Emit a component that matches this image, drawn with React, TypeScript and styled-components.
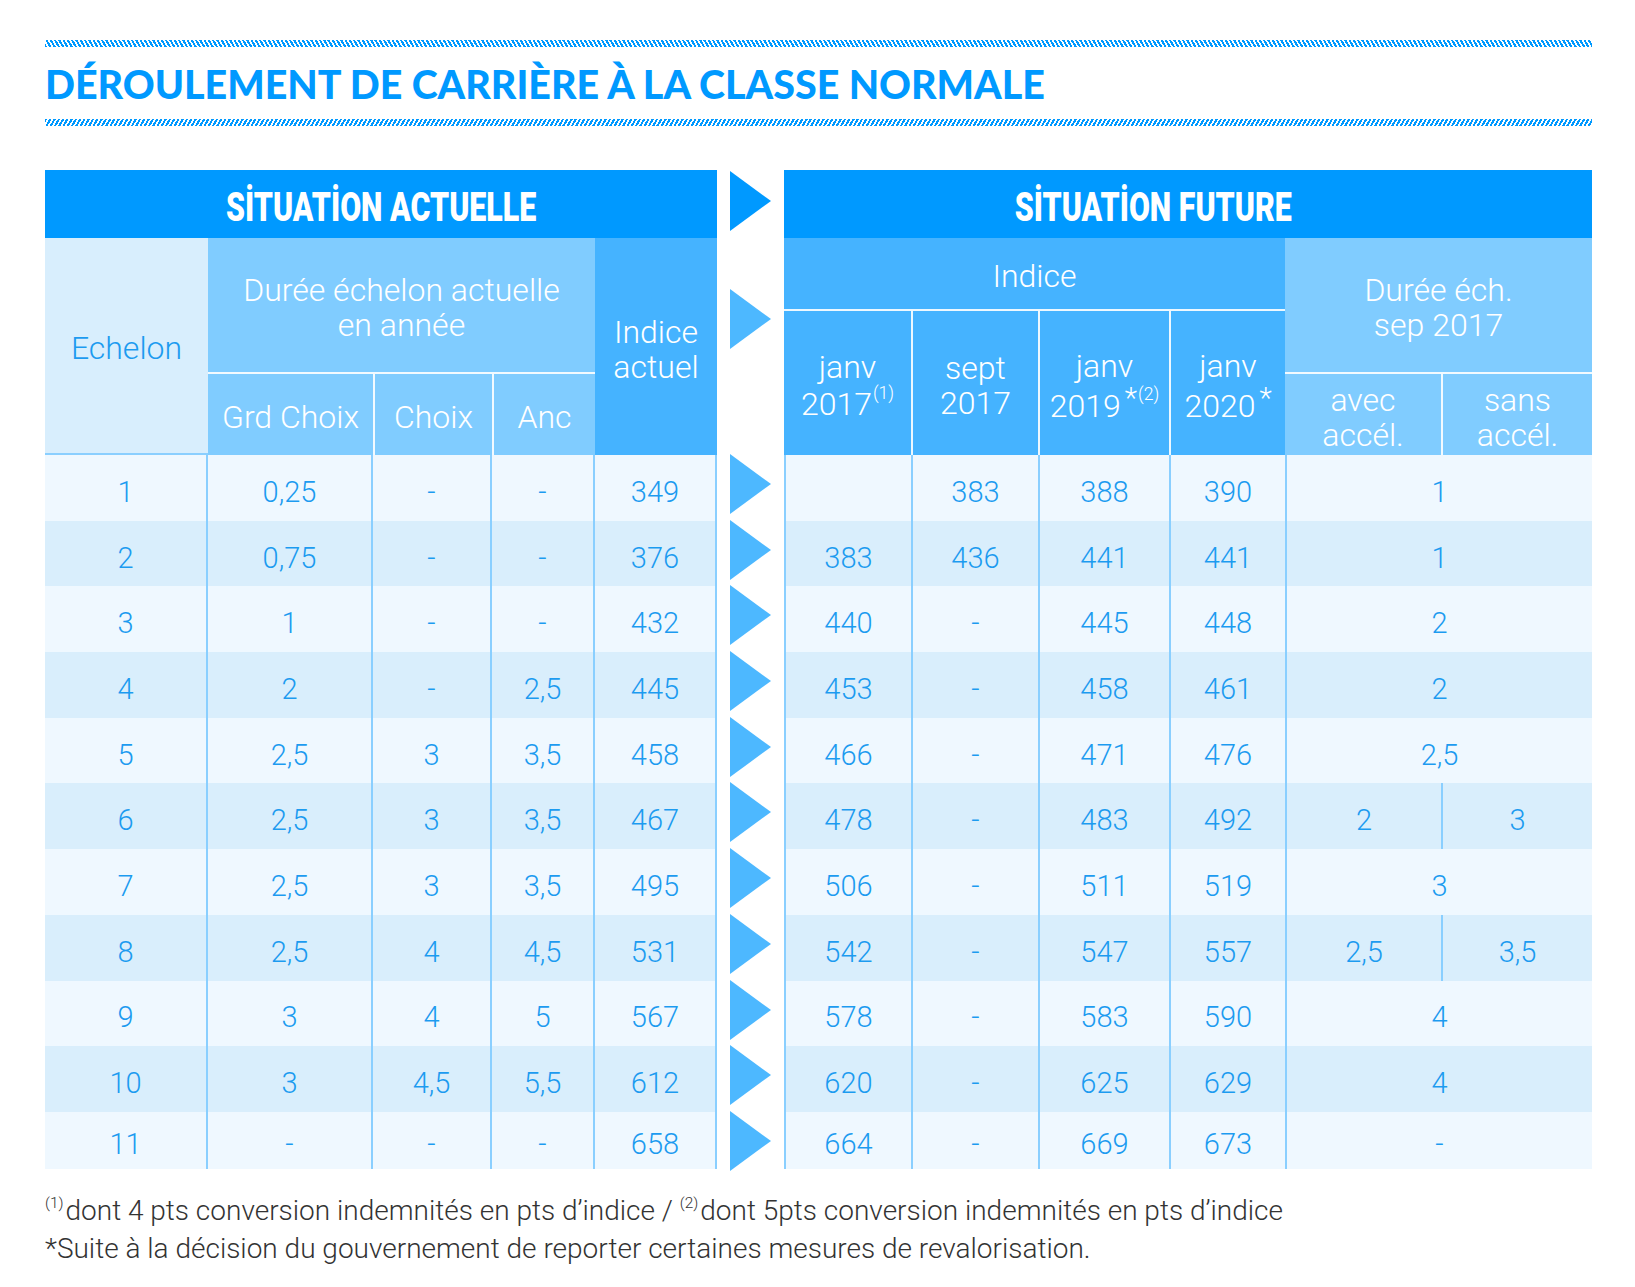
import React from "react"
import styled, { createGlobalStyle } from "styled-components"

const BLUE = "#0099ff"
const TEXT = "#1c9bf0"
const GRID_LINE = "#8acfff"
const WHITE_LINE = "rgba(255, 255, 255, 0.9)"
const ROWS = "68px 71px 63px 83px repeat(10, 65.7px) 57px"

const GlobalStyle = createGlobalStyle`
  html, body {
    margin: 0;
    padding: 0;
    background: #ffffff;
  }
  body {
    font-family: Roboto, "Noto Sans", sans-serif;
  }
`

const Page = styled.div`
  width: 1635px;
  height: 1287px;
  box-sizing: border-box;
  padding: 40px 0 0 45px;
`

const Hatch = styled.div<{ $flip?: boolean }>`
  width: 1547px;
  height: 7px;
  background: repeating-linear-gradient(
    ${p => (p.$flip ? "120deg" : "60deg")},
    ${BLUE} 0 2px,
    transparent 2px 3.7px
  );
`

const Title = styled.h1`
  margin: 0;
  height: 72px;
  display: flex;
  align-items: center;
  font-family: Lato, "Noto Sans", sans-serif;
  font-weight: 900;
  font-size: 39.4px;
  color: ${BLUE};
`

const Tables = styled.div`
  display: flex;
  margin-top: 44px;
`

const Grid = styled.div<{ $cols: string }>`
  display: grid;
  grid-template-columns: ${p => p.$cols};
  grid-template-rows: ${ROWS};
`

const TitleBar = styled.div<{ $shift?: number }>`
  grid-row: 1;
  grid-column: 1 / -1;
  background: ${BLUE};
  display: flex;
  align-items: center;
  justify-content: center;
  padding-right: ${p => p.$shift ?? 0}px;
  overflow: hidden;
`

const TitleText = styled.span`
  display: inline-block;
  font-family: Roboto, "Noto Sans", sans-serif;
  font-weight: 900;
  font-size: 40px;
  color: #ffffff;
  white-space: nowrap;
  transform: scaleX(0.76);
  margin-top: 6px;
`

type Tone = "pale" | "light" | "mid"

const toneBg: Record<Tone, string> = {
  pale: "#d8eefd",
  light: "#80ccff",
  mid: "#45b3ff",
}

const HeadCell = styled.div<{
  $tone: Tone
  $row: string
  $col: string
  $lineLeft?: boolean
  $lineTop?: boolean
  $lineBottom?: boolean
}>`
  grid-row: ${p => p.$row};
  grid-column: ${p => p.$col};
  background: ${p => toneBg[p.$tone]};
  color: ${p => (p.$tone === "pale" ? TEXT : "#ffffff")};
  border-left: ${p => (p.$lineLeft ? `2px solid ${WHITE_LINE}` : "none")};
  border-top: ${p => (p.$lineTop ? `2px solid ${WHITE_LINE}` : "none")};
  border-bottom: ${p => (p.$lineBottom ? `2px solid ${GRID_LINE}` : "none")};
  box-sizing: border-box;
  display: flex;
  align-items: center;
  justify-content: center;
  text-align: center;
  padding-top: 6px;
  font-weight: 300;
  font-size: 32px;
  line-height: 35px;
`

const DataCell = styled.div<{ $alt: boolean; $side: "left" | "right"; $span?: boolean }>`
  grid-column: ${p => (p.$span ? "span 2" : "auto")};
  background: ${p => (p.$alt ? "#d9eefc" : "#eff8ff")};
  ${p => `border-${p.$side}: 2px solid ${GRID_LINE};`}
  box-sizing: border-box;
  display: flex;
  align-items: center;
  justify-content: center;
  padding-top: 8px;
  color: ${TEXT};
  font-weight: 300;
  font-size: 29px;
`

const ArrowColumn = styled.div`
  width: 67px;
  display: grid;
  grid-template-rows: ${ROWS};
  justify-items: center;
`

const ArrowSlot = styled.div<{ $row: string; $offset: number }>`
  grid-row: ${p => p.$row};
  align-self: start;
  margin-top: ${p => p.$offset}px;
  height: 60px;
  line-height: 0;
`

const Sup = styled.sup`
  display: inline-block;
  font-size: 0.55em;
  line-height: 1;
  vertical-align: 0.9em;
  margin-left: 1px;
`

const Star = styled.span`
  display: inline-block;
  font-size: 0.9em;
  line-height: 1;
  vertical-align: 0.3em;
  margin-left: 4px;
`

const Notes = styled.div`
  margin-top: 23px;
  font-weight: 300;
  font-size: 28px;
  line-height: 38px;
  color: #333333;
`

const NoteSup = styled.sup`
  font-size: 0.55em;
  line-height: 0;
  vertical-align: 0.75em;
  margin-right: 2px;
`

const Arrow: React.FC<{ color: string }> = ({ color }) => (
  <svg width="41" height="60" viewBox="0 0 41 60">
    <polygon points="0,0 41,30 0,60" fill={color} />
  </svg>
)

const left = [
  ["1", "0,25", "-", "-", "349"],
  ["2", "0,75", "-", "-", "376"],
  ["3", "1", "-", "-", "432"],
  ["4", "2", "-", "2,5", "445"],
  ["5", "2,5", "3", "3,5", "458"],
  ["6", "2,5", "3", "3,5", "467"],
  ["7", "2,5", "3", "3,5", "495"],
  ["8", "2,5", "4", "4,5", "531"],
  ["9", "3", "4", "5", "567"],
  ["10", "3", "4,5", "5,5", "612"],
  ["11", "-", "-", "-", "658"],
]

// last entries: one value = merged avec/sans, two values = split
const right: string[][] = [
  ["", "383", "388", "390", "1"],
  ["383", "436", "441", "441", "1"],
  ["440", "-", "445", "448", "2"],
  ["453", "-", "458", "461", "2"],
  ["466", "-", "471", "476", "2,5"],
  ["478", "-", "483", "492", "2", "3"],
  ["506", "-", "511", "519", "3"],
  ["542", "-", "547", "557", "2,5", "3,5"],
  ["578", "-", "583", "590", "4"],
  ["620", "-", "625", "629", "4"],
  ["664", "-", "669", "673", "-"],
]

const App: React.FC = () => {
  return (
    <Page>
      <GlobalStyle />
      <Hatch />
      <Title>DÉROULEMENT DE CARRIÈRE À LA CLASSE NORMALE</Title>
      <Hatch $flip />
      <Tables>
        <Grid $cols="163px 165px 119px 103px 122px">
          <TitleBar>
            <TitleText>SİTUATİON ACTUELLE</TitleText>
          </TitleBar>
          <HeadCell $tone="pale" $row="2 / span 3" $col="1" $lineBottom>
            Echelon
          </HeadCell>
          <HeadCell $tone="light" $row="2 / span 2" $col="2 / span 3">
            Durée échelon actuelle
            <br />
            en année
          </HeadCell>
          <HeadCell $tone="mid" $row="2 / span 3" $col="5">
            Indice
            <br />
            actuel
          </HeadCell>
          <HeadCell $tone="light" $row="4" $col="2" $lineTop>
            Grd Choix
          </HeadCell>
          <HeadCell $tone="light" $row="4" $col="3" $lineTop $lineLeft>
            Choix
          </HeadCell>
          <HeadCell $tone="light" $row="4" $col="4" $lineTop $lineLeft>
            Anc
          </HeadCell>
          {left.map((row, i) =>
            row.map((value, j) => (
              <DataCell key={`l${i}-${j}`} $alt={i % 2 === 1} $side="right">
                {value}
              </DataCell>
            ))
          )}
        </Grid>

        <ArrowColumn>
          <ArrowSlot $row="1" $offset={1}>
            <Arrow color={BLUE} />
          </ArrowSlot>
          <ArrowSlot $row="2 / span 3" $offset={51}>
            <Arrow color="#4db8ff" />
          </ArrowSlot>
          {left.map((_, i) => (
            <ArrowSlot key={`a${i}`} $row={`${i + 5}`} $offset={-1}>
              <Arrow color="#4db8ff" />
            </ArrowSlot>
          ))}
        </ArrowColumn>

        <Grid $cols="127px 127px 131px 116px 156px 151px">
          <TitleBar $shift={70}>
            <TitleText>SİTUATİON FUTURE</TitleText>
          </TitleBar>
          <HeadCell $tone="mid" $row="2" $col="1 / span 4">
            Indice
          </HeadCell>
          <HeadCell $tone="light" $row="2 / span 2" $col="5 / span 2">
            Durée éch.
            <br />
            sep 2017
          </HeadCell>
          <HeadCell $tone="mid" $row="3 / span 2" $col="1" $lineTop>
            <span>
              janv
              <br />
              2017<Sup>(1)</Sup>
            </span>
          </HeadCell>
          <HeadCell $tone="mid" $row="3 / span 2" $col="2" $lineTop $lineLeft>
            sept
            <br />
            2017
          </HeadCell>
          <HeadCell $tone="mid" $row="3 / span 2" $col="3" $lineTop $lineLeft>
            <span>
              janv
              <br />
              2019<Star>*</Star>
              <Sup>(2)</Sup>
            </span>
          </HeadCell>
          <HeadCell $tone="mid" $row="3 / span 2" $col="4" $lineTop $lineLeft>
            <span>
              janv
              <br />
              2020<Star>*</Star>
            </span>
          </HeadCell>
          <HeadCell $tone="light" $row="4" $col="5" $lineTop>
            avec
            <br />
            accél.
          </HeadCell>
          <HeadCell $tone="light" $row="4" $col="6" $lineTop $lineLeft>
            sans
            <br />
            accél.
          </HeadCell>
          {right.map((row, i) => {
            const split = row.length === 6
            return row.map((value, j) => (
              <DataCell
                key={`r${i}-${j}`}
                $alt={i % 2 === 1}
                $side="left"
                $span={j === 4 && !split}
              >
                {value}
              </DataCell>
            ))
          })}
        </Grid>
      </Tables>
      <Notes>
        <div>
          <NoteSup>(1)</NoteSup>dont 4 pts conversion indemnités en pts d’indice /{" "}
          <NoteSup>(2)</NoteSup>dont 5pts conversion indemnités en pts d’indice
        </div>
        <div>*Suite à la décision du gouvernement de reporter certaines mesures de revalorisation.</div>
      </Notes>
    </Page>
  )
}

export default App
